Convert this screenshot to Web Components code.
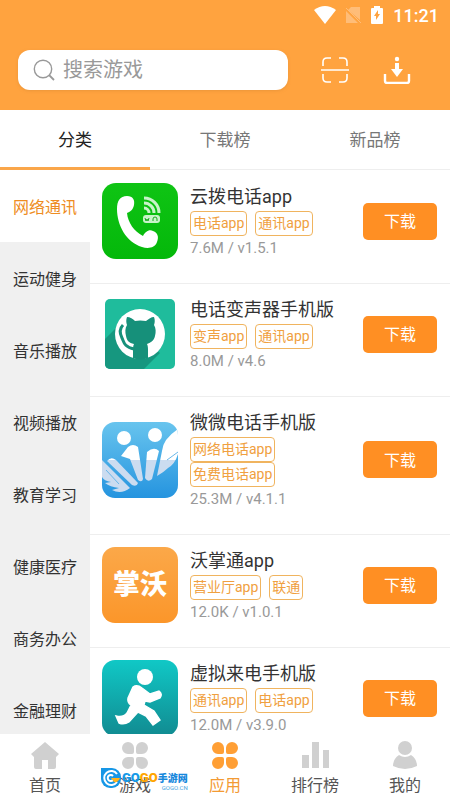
<!DOCTYPE html>
<html lang="zh-CN">
<head>
<meta charset="utf-8">
<meta name="viewport" content="width=device-width, initial-scale=1">
<title>应用</title>
<style>
    body {
        margin: 0;
        font-family: Roboto, "Noto Sans CJK SC", sans-serif;
        color: #333;
        background: #fff;
    }
</style>
</head>
<body>

<app-shell>
    <top-bar slot="top" time="11:21" placeholder="搜索游戏"></top-bar>

    <tab-bar slot="top">
        <tab-item active>分类</tab-item>
        <tab-item>下载榜</tab-item>
        <tab-item>新品榜</tab-item>
    </tab-bar>

    <side-menu slot="side">
        <side-item active>网络通讯</side-item>
        <side-item>运动健身</side-item>
        <side-item>音乐播放</side-item>
        <side-item>视频播放</side-item>
        <side-item>教育学习</side-item>
        <side-item>健康医疗</side-item>
        <side-item>商务办公</side-item>
        <side-item>金融理财</side-item>
    </side-menu>

    <app-row name="云拨电话app" tags="电话app,通讯app" meta="7.6M / v1.5.1">
        <svg slot="icon" viewBox="0 0 76 76">
            <linearGradient id="green" x2="0" y2="1"><stop stop-color="#0fc414"/><stop offset="1" stop-color="#04b80a"/></linearGradient>
            <rect width="76" height="76" rx="14" fill="url(#green)"/>
            <path d="M25 13C31 13 33 17 32 22C31 27 28 29 25 30C26 40 32 48 41 53C43 49 47 46 51 48C56 50 57 54 55 59C53 65 46 66 40 64C24 59 15 42 15 26C15 18 18 13 25 13Z" fill="#fff"/>
            <g fill="none" stroke="#c9f3c9" stroke-width="3"><path d="M42 15a15 15 0 0 1 15 15M42 20a10 10 0 0 1 10 10M42 25a5 5 0 0 1 5 5"/></g>
            <rect x="41" y="32" width="17" height="8" rx="3" fill="#c9f3c9"/>
            <path d="M43 35l1 3 1-2 1 2 1-3M51 38v-2a2 2 0 0 1 4 0v2" fill="none" stroke="#19a91e"/>
        </svg>
    </app-row>

    <app-row name="电话变声器手机版" tags="变声app,通讯app" meta="8.0M / v4.6">
        <svg slot="icon" viewBox="0 0 76 76">
            <rect x="3" y="3" width="70" height="70" rx="5" fill="#1fbc9c"/>
            <path d="M3 43L19 27L58 57L42 73H8a5 5 0 0 1-5-5Z" fill="#16977f"/>
            <circle cx="38" cy="38" r="25" fill="#fff"/>
            <path d="M25 21c3 0 6 2 8 4q5-1 11 0c3-2 5-4 8-4 1 3 1 5 0 8 2 3 2 7 1 11-1 5-5 7-8 8 1 2 1 4 1 7v7q-8 3-15 0v-7c0-3 0-5 1-7-5-1-7-3-8-8-1-4-1-8 1-11-1-3-1-5 0-8Z" fill="#16907a"/>
            <path d="M21 29c-4 4-3 9-1 13s2 9 12 11" fill="none" stroke="#16907a" stroke-width="3"/>
        </svg>
    </app-row>

    <app-row name="微微电话手机版" tags="网络电话app,免费电话app" meta="25.3M / v4.1.1">
        <svg slot="icon" viewBox="0 0 76 76">
            <linearGradient id="sky" x2="0" y2="1"><stop stop-color="#68c4ee"/><stop offset="1" stop-color="#2594df"/></linearGradient>
            <linearGradient id="wing" gradientUnits="userSpaceOnUse" x1="0" y1="0" x2="0" y2="76"><stop offset=".5" stop-color="#fff"/><stop offset=".5" stop-color="#cbdcf0"/></linearGradient>
            <clipPath id="tile"><rect width="76" height="76" rx="13"/></clipPath>
            <g clip-path="url(#tile)">
                <rect width="76" height="76" fill="url(#sky)"/>
                <g fill="url(#wing)">
                    <circle cx="22" cy="16" r="7"/>
                    <circle cx="53" cy="13" r="7"/>
                    <path d="M19 34L26 25Q31 21 36 25L41 57Q40 61 36 58L28 37Z"/>
                    <path d="M45 30Q52 24 57 29L50 57Q46 61 43 56Z"/>
                    <path d="M5 39Q9 34 14 38L36 61Q35 65 30 63Z"/>
                    <path d="M55 54L60 29Q61 17 76 7V32Q73 42 66 46Q62 50 55 54Z"/>
                    <path d="M0 38L5 43L28 66Q19 73 10 68L17 66Q8 65 3 61L9 60Q2 59 0 55Z"/>
                </g>
                <path d="M65 38l11-8M4 48l13 14" fill="none" stroke="#69b7e9" stroke-width="1"/>
            </g>
        </svg>
    </app-row>

    <app-row name="沃掌通app" tags="营业厅app,联通" meta="12.0K / v1.0.1">
        <svg slot="icon" viewBox="0 0 76 76">
            <linearGradient id="amber" x2="0" y2="1"><stop stop-color="#fba849"/><stop offset="1" stop-color="#fb962a"/></linearGradient>
            <rect width="76" height="76" rx="13" fill="url(#amber)"/>
            <text x="38" y="47" text-anchor="middle" font-size="27" font-weight="900" fill="#fff">掌沃</text>
        </svg>
    </app-row>

    <app-row name="虚拟来电手机版" tags="通讯app,电话app" meta="12.0M / v3.9.0">
        <svg slot="icon" viewBox="0 0 76 76">
            <linearGradient id="teal" x2="0" y2="1"><stop stop-color="#10c8c6"/><stop offset="1" stop-color="#118b91"/></linearGradient>
            <rect width="76" height="76" rx="13" fill="url(#teal)"/>
            <circle cx="43" cy="17" r="8" fill="#fff"/>
            <path d="M31 27Q35 24 40 28L48 34L57 31Q61 34 58 38L48 42L43 41L42 45L52 51L58 60L51 65L44 56L36 52L27 62Q22 65 17 63L14 56Q21 58 25 53L29 45Q25 43 26 38Z" fill="#fff" stroke="#fff" stroke-width="1.4"/>
        </svg>
    </app-row>

    <nav-bar slot="bottom">
        <nav-item label="首页">
            <svg viewBox="0 0 28 28"><path d="M14 1L28 13L25 16V26Q25 28 23 28H17V19H11V28H5Q3 28 3 26V16L0 13Z"/></svg>
        </nav-item>
        <nav-item label="游戏">
            <svg viewBox="0 0 28 28"><path d="M7 1a6 6 0 0 1 6 6v4q0 2-2 2H7A6 6 0 0 1 7 1ZM21 1a6 6 0 0 0-6 6v4q0 2 2 2h4a6 6 0 0 0 0-12ZM7 28a6 6 0 0 0 6-6v-4q0-2-2-2H7a6 6 0 0 0 0 12ZM21 28a6 6 0 0 1-6-6v-4q0-2 2-2h4a6 6 0 0 1 0 12Z"/></svg>
        </nav-item>
        <nav-item label="应用" active>
            <svg viewBox="0 0 28 28"><path d="M7 1a6 6 0 0 1 6 6v4q0 2-2 2H7A6 6 0 0 1 7 1ZM21 1a6 6 0 0 0-6 6v4q0 2 2 2h4a6 6 0 0 0 0-12ZM7 28a6 6 0 0 0 6-6v-4q0-2-2-2H7a6 6 0 0 0 0 12ZM21 28a6 6 0 0 1-6-6v-4q0-2 2-2h4a6 6 0 0 1 0 12Z"/></svg>
        </nav-item>
        <nav-item label="排行榜">
            <svg viewBox="0 0 28 28"><path d="M1 14h7v13H1zM11 1h7v26h-7zM22 9h6v18h-6z"/></svg>
        </nav-item>
        <nav-item label="我的">
            <svg viewBox="0 0 28 28"><circle cx="14" cy="7" r="7"/><path d="M8 14Q14 18 20 14Q26 18 26 25Q14 31 2 25Q2 18 8 14Z"/></svg>
        </nav-item>
    </nav-bar>

    <site-mark slot="bottom"></site-mark>
</app-shell>

<script>
class BaseElement extends HTMLElement {
    constructor() {
        super();
        this.attachShadow({ mode: 'open' });
    }

    connectedCallback() {
        const template = document.createElement('template');
        template.innerHTML = this.getTemplate() + `<style>${this.getStyles()}</style>`;
        this.shadowRoot.appendChild(template.content.cloneNode(true));
    }

    attr(name) {
        return this.getAttribute(name) || '';
    }
}

class AppShell extends BaseElement {
    getTemplate() {
        return `
            <slot name="top"></slot>
            <main>
                <slot name="side"></slot>
                <section><slot></slot></section>
            </main>
            <footer><slot name="bottom"></slot></footer>
        `;
    }

    getStyles() {
        return `
            :host {
                display: flex;
                flex-direction: column;
                height: 100vh;
            }
            main {
                flex: 1;
                min-height: 0;
                display: flex;
                overflow: hidden;
            }
            section {
                flex: 1;
                min-width: 0;
                padding-top: 1px;
            }
            footer {
                position: relative;
            }
        `;
    }
}
customElements.define('app-shell', AppShell);

class TopBar extends BaseElement {
    getTemplate() {
        return `
            <div class="status">
                <svg width="22" height="18" viewBox="0 0 22 18"><path d="M0 4Q11-4 22 4L11 18Z" fill="#fff"/></svg>
                <svg width="17" height="18" viewBox="0 0 17 18" class="sim"><path d="M6 1h9v13L3 4ZM1 5l12 12H1Z" fill="#ffbd78"/><path d="M1 2l15 15" stroke="#ffbd78"/></svg>
                <svg width="12" height="18" viewBox="0 0 12 18" class="battery"><path d="M3 2V0h6v2h2q1 0 1 1v14q0 1-1 1H1q-1 0-1-1V3q0-1 1-1Z" fill="#fff"/><path d="M7 4L3 10h2v4l4-6H7Z" fill="#ffa33f"/></svg>
                <span>${this.attr('time')}</span>
            </div>
            <div class="tools">
                <label>
                    <svg width="22" height="22" viewBox="0 0 22 22" fill="none" stroke="#999" stroke-width="1.4"><circle cx="10" cy="10" r="8.7"/><path d="M16 16l5 5" stroke-width="1.8"/></svg>
                    <input type="search" aria-label="${this.attr('placeholder')}" placeholder="${this.attr('placeholder')}">
                </label>
                <div class="actions">
                    <button aria-label="扫一扫">
                        <svg width="28" height="28" viewBox="0 0 28 28" fill="none" stroke="#fff" stroke-width="1.6"><path d="M2 10V6q0-4 4-4h4M18 2h4q4 0 4 4v4M2 18v4q0 4 4 4h4M18 26h4q4 0 4-4v-4M0 14h28"/></svg>
                    </button>
                    <button aria-label="下载管理">
                        <svg width="28" height="28" viewBox="0 0 28 28"><circle cx="14" cy="3" r="2.2" fill="#fff"/><path d="M12 7h4v6h4l-6 8-6-8h4Z" fill="#fff"/><path d="M2 18v7q0 2 2 2h20q2 0 2-2v-7" fill="none" stroke="#fff" stroke-width="2.4"/></svg>
                    </button>
                </div>
            </div>
        `;
    }

    getStyles() {
        return `
            :host {
                display: block;
                background: #ffa33f;
            }
            .status {
                height: 30px;
                padding: 0 11px;
                display: flex;
                align-items: center;
                justify-content: flex-end;
                color: #fff;
                font-size: 18px;
                font-weight: 500;
            }
            .sim {
                margin: 0 9px;
            }
            .battery {
                margin-right: 10px;
            }
            .tools {
                display: flex;
                padding: 20px 18px;
            }
            label {
                flex: 1;
                min-width: 0;
                height: 40px;
                box-sizing: border-box;
                padding: 0 15px;
                display: flex;
                align-items: center;
                gap: 8px;
                background: #fff;
                border-radius: 12px;
                box-shadow: 0 1px 3px #d88a3580;
            }
            input {
                flex: 1;
                min-width: 0;
                padding: 0;
                border: 0;
                outline: 0;
                background: none;
                font: inherit;
                font-size: 20px;
            }
            input::placeholder {
                color: #999;
            }
            .actions {
                display: flex;
                align-items: center;
                gap: 34px;
                padding: 0 21px 0 33px;
            }
            button {
                display: flex;
                padding: 0;
                border: 0;
                background: none;
            }
        `;
    }
}
customElements.define('top-bar', TopBar);

class TabBar extends BaseElement {
    getTemplate() {
        return `<slot></slot>`;
    }

    getStyles() {
        return `
            :host {
                display: flex;
                height: 60px;
            }
        `;
    }
}
customElements.define('tab-bar', TabBar);

class TabItem extends BaseElement {
    getTemplate() {
        return `<button><slot></slot></button>`;
    }

    getStyles() {
        return `
            :host {
                flex: 1;
                display: flex;
                border-bottom: 1px solid #eee;
            }
            :host([active]) {
                border-bottom: 3px solid #faa64a;
            }
            button {
                flex: 1;
                height: 60px;
                border: 0;
                padding: 0 0 3px;
                background: none;
                font: inherit;
                font-size: 17px;
                color: #777;
            }
            :host([active]) button {
                color: #222;
            }
        `;
    }
}
customElements.define('tab-item', TabItem);

class SideMenu extends BaseElement {
    getTemplate() {
        return `<slot></slot>`;
    }

    getStyles() {
        return `
            :host {
                display: block;
                width: 90px;
                background: #f0f0f0;
            }
        `;
    }
}
customElements.define('side-menu', SideMenu);

class SideItem extends BaseElement {
    getTemplate() {
        return `<button><slot></slot></button>`;
    }

    getStyles() {
        return `
            :host {
                display: block;
            }
            button {
                width: 100%;
                height: 72px;
                border: 0;
                padding: 0;
                background: none;
                font: inherit;
                font-size: 16px;
                color: #333;
            }
            :host([active]) button {
                background: #fff;
                color: #ee8c22;
            }
        `;
    }
}
customElements.define('side-item', SideItem);

class AppRow extends BaseElement {
    getTemplate() {
        const tags = this.attr('tags').split(',').map(tag => `<li>${tag}</li>`).join('');
        return `
            <slot name="icon"></slot>
            <div class="info">
                <h2>${this.attr('name')}</h2>
                <ul>${tags}</ul>
                <p>${this.attr('meta')}</p>
            </div>
            <button>下载</button>
        `;
    }

    getStyles() {
        return `
            :host {
                display: flex;
                align-items: center;
                padding: 10px 13px 22px 12px;
                border-bottom: 1px solid #eee;
            }
            ::slotted(svg) {
                width: 76px;
                height: 76px;
                margin-right: 12px;
            }
            .info {
                flex: 1;
                min-width: 0;
            }
            h2, ul, p {
                margin: 0;
                padding: 0;
            }
            h2 {
                padding-top: 2px;
                font-size: 18px;
                font-weight: 400;
                line-height: 28px;
                white-space: nowrap;
            }
            ul {
                display: flex;
                flex-wrap: wrap;
                column-gap: 8px;
                list-style: none;
            }
            li {
                box-sizing: border-box;
                height: 25px;
                padding: 0 2px;
                border: 1px solid #f0b45f;
                border-radius: 4px;
                font-size: 14px;
                line-height: 23px;
                color: #f0a040;
            }
            p {
                font-size: 15px;
                line-height: 25px;
                color: #999;
            }
            button {
                width: 74px;
                height: 37px;
                padding: 0 0 2px;
                border: 0;
                border-radius: 5px;
                background: #ff8f23;
                font: inherit;
                font-size: 16px;
                color: #fff;
            }
        `;
    }
}
customElements.define('app-row', AppRow);

class NavBar extends BaseElement {
    getTemplate() {
        return `<nav><slot></slot></nav>`;
    }

    getStyles() {
        return `
            :host {
                display: block;
                background: #fff;
            }
            nav {
                display: flex;
                height: 66px;
            }
        `;
    }
}
customElements.define('nav-bar', NavBar);

class NavItem extends BaseElement {
    getTemplate() {
        return `<a href="#"><slot></slot><span>${this.attr('label')}</span></a>`;
    }

    getStyles() {
        return `
            :host {
                flex: 1;
            }
            a {
                display: flex;
                flex-direction: column;
                align-items: center;
                gap: 7px;
                padding-top: 7px;
                color: #555;
                text-decoration: none;
                font-size: 16px;
                line-height: 20px;
            }
            ::slotted(svg) {
                width: 28px;
                height: 28px;
                fill: #d0d0d0;
            }
            :host([active]) a {
                color: #f39a33;
            }
            :host([active]) ::slotted(svg) {
                fill: #ff9f35;
            }
        `;
    }
}
customElements.define('nav-item', NavItem);

// Site badge lying over the bottom bar
class SiteMark extends BaseElement {
    getTemplate() {
        return `
            <svg width="20" height="20" viewBox="0 0 20 20">
                <path d="M0 0h11a9 9 0 0 1 9 9v2a9 9 0 0 1-9 9H9a9 9 0 0 1-9-9Z" fill="#1797e6"/>
                <path d="M16 6A7 7 0 1 0 16 14" fill="none" stroke="#fff" stroke-width="2"/>
                <path d="M12 8a3 3 0 1 0 0 4" fill="none" stroke="#fff" stroke-width="2"/>
                <path d="M10 10h9q-2 5-6 4Z" fill="#ffb21c"/>
            </svg>
            <div>
                <b><i>GO</i><em>GO</em>手游网</b>
                <small>GOGO.CN</small>
            </div>
        `;
    }

    getStyles() {
        return `
            :host {
                position: absolute;
                left: 101px;
                bottom: 10px;
                display: flex;
                gap: 1px;
                pointer-events: none;
            }
            div {
                display: flex;
                flex-direction: column;
            }
            b {
                display: flex;
                align-items: center;
                height: 18px;
                font-size: 10px;
                font-weight: 900;
                color: #1788dc;
            }
            i, em {
                font-size: 13px;
                font-style: normal;
                color: #159ae8;
            }
            em {
                color: #ffa500;
            }
            small {
                align-self: flex-end;
                font-size: 6px;
                line-height: 4px;
                color: #4aa5e0;
            }
        `;
    }
}
customElements.define('site-mark', SiteMark);
</script>
</body>
</html>
